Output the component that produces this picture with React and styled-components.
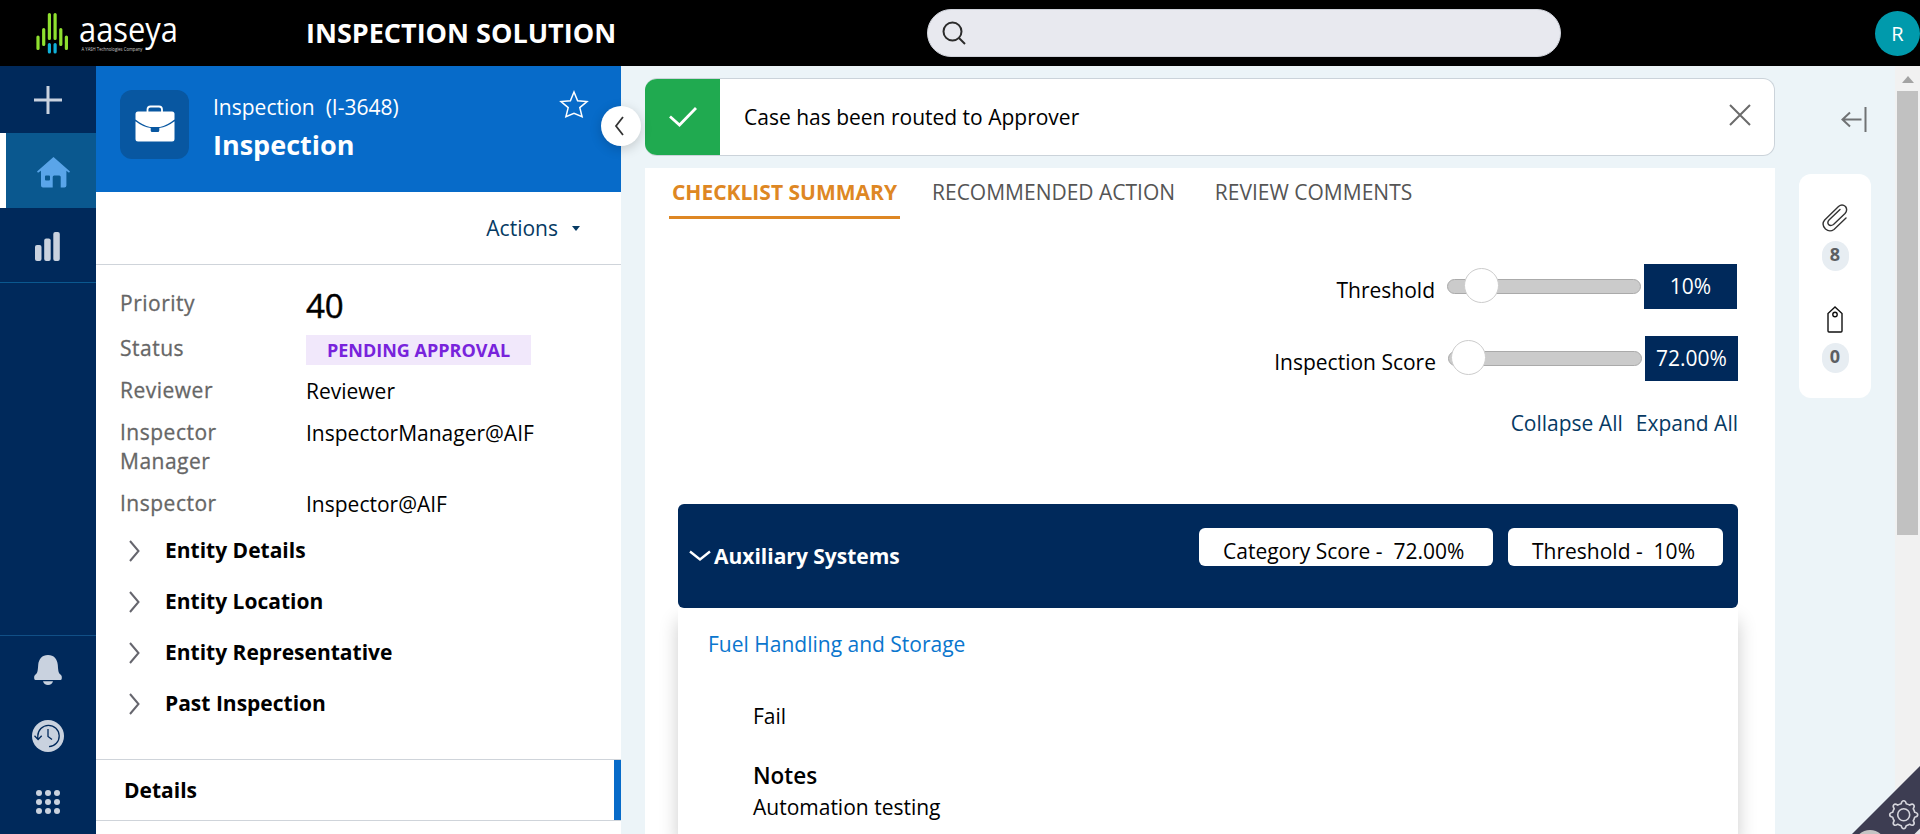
import React from "react";
import styled, { createGlobalStyle } from "styled-components";

const GlobalStyle = createGlobalStyle`
  * { box-sizing: border-box; }
  html, body { margin: 0; padding: 0; overflow: hidden; }
  body { font-family: "Open Sans", "Noto Sans", sans-serif; font-size: 21px; color: #000; background: #ecf4f8; }
  button { font: inherit; color: inherit; background: none; border: 0; padding: 0; cursor: pointer; }
  svg { display: block; flex: none; }
`;

const navy = "#00295b";
const blue = "#076bc9";

const Page = styled.div`
  display: flex;
  flex-direction: column;
  width: 1920px;
  height: 834px;
  overflow: hidden;
  position: relative;
`;

/* ---------- header ---------- */
const Header = styled.header`
  flex: none;
  display: flex;
  align-items: center;
  height: 66px;
  background: #000;
`;
const LogoBox = styled.div`
  width: 306px;
  padding-left: 36px;
`;
const AppTitle = styled.h1`
  margin: 0;
  padding-bottom: 2px;
  width: 621px;
  font-size: 27px;
  font-weight: 700;
  color: #fff;
  white-space: nowrap;
`;
const SearchBar = styled.div`
  display: flex;
  align-items: center;
  width: 634px;
  height: 48px;
  padding-left: 14px;
  border: 1px solid #cfd2da;
  border-radius: 24px;
  background: #e8e9ef;
`;
const Avatar = styled.div`
  margin-left: auto;
  display: flex;
  align-items: center;
  justify-content: center;
  width: 45px;
  height: 45px;
  border-radius: 50%;
  background: #009aac;
  color: #fff;
  font-size: 20px;
`;

/* ---------- shell ---------- */
const Body = styled.div`
  flex: 1;
  min-height: 0;
  display: flex;
`;
const Rail = styled.nav`
  flex: none;
  display: flex;
  flex-direction: column;
  width: 96px;
  background: ${navy};
`;
const RailItem = styled.button`
  display: flex;
  align-items: center;
  justify-content: center;
  width: 96px;
  height: ${(p) => p.$h}px;
  border-left: ${(p) => (p.$active ? "6px solid #fff" : "0")};
  padding: ${(p) => (p.$active ? "4px 0 0 5px" : p.$line ? "2px 1px 0 0" : "0")};
  background: ${(p) => (p.$active ? "#0a588f" : "transparent")};
  border-bottom: ${(p) => (p.$line ? "1px solid #0a588f" : "0")};
`;
const RailFooter = styled.div`
  margin-top: auto;
  height: 199px;
  padding-top: 1px;
  border-top: 1px solid #114f86;
`;

/* ---------- case panel ---------- */
const CasePanel = styled.aside`
  position: relative;
  flex: none;
  display: flex;
  flex-direction: column;
  width: 525px;
  background: #fff;
`;
const CaseHeader = styled.div`
  flex: none;
  display: flex;
  align-items: flex-start;
  height: 126px;
  padding: 24px 32px 0 24px;
  background: ${blue};
  color: #fff;
`;
const CaseIcon = styled.div`
  display: flex;
  align-items: center;
  justify-content: center;
  width: 69px;
  height: 69px;
  padding-bottom: 2px;
  border-radius: 12px;
  background: #0857a1;
`;
const CaseNames = styled.div`
  flex: 1;
  margin-left: 24px;
`;
const CaseType = styled.div`
  height: 35px;
  line-height: 34px;
  white-space: pre;
`;
const CaseName = styled.div`
  height: 40px;
  line-height: 40px;
  font-size: 27px;
  font-weight: 700;
`;
const CollapseKnob = styled.button`
  position: absolute;
  right: -20px;
  top: 40px;
  z-index: 2;
  display: flex;
  align-items: center;
  justify-content: center;
  width: 40px;
  height: 40px;
  padding-right: 5px;
  border-radius: 50%;
  background: #fff;
  box-shadow: 0 3px 12px rgba(0, 0, 0, 0.18);
`;
const ActionRow = styled.div`
  flex: none;
  display: flex;
  align-items: center;
  justify-content: flex-end;
  gap: 14px;
  height: 73px;
  padding-right: 41px;
  border-bottom: 1px solid #cfd4da;
  color: #063a63;
`;
const Fields = styled.dl`
  margin: 0;
  padding: 24px 24px 0 24px;
`;
const Field = styled.div`
  display: grid;
  grid-template-columns: 186px 1fr;
  height: ${(p) => p.$h}px;
`;
const FieldLabel = styled.dt`
  width: 130px;
  line-height: 29px;
  color: #666;
  letter-spacing: 0.5px;
  -webkit-text-stroke: 0.3px #666;
`;
const FieldValue = styled.dd`
  margin: ${(p) => (p.$big ? 2 : 1)}px 0 0;
  line-height: 29px;
  font-size: ${(p) => (p.$big ? 33 : 21)}px;
  -webkit-text-stroke: ${(p) => (p.$big ? 0.5 : 0)}px #000;
`;
const StatusBadge = styled.span`
  display: flex;
  align-items: center;
  justify-content: center;
  width: 225px;
  height: 30px;
  background: #f1e8fb;
  color: #7823dc;
  font-size: 18px;
  font-weight: 700;
`;
const Section = styled.button`
  display: flex;
  align-items: center;
  gap: 25px;
  width: 100%;
  height: 51px;
  padding-left: 33px;
  font-weight: 700;
`;
const SectionName = styled.span`
  padding-bottom: 1px;
`;
const DetailsTab = styled.div`
  display: flex;
  align-items: center;
  height: 62px;
  margin-top: 30px;
  padding-left: 28px;
  border-top: 1px solid #cfd4da;
  border-bottom: 1px solid #cfd4da;
  font-weight: 700;
  &::after {
    content: "";
    width: 7px;
    height: 60px;
    margin-left: auto;
    background: ${blue};
  }
`;

/* ---------- work area ---------- */
const WorkArea = styled.main`
  flex: none;
  display: flex;
  flex-direction: column;
  width: 1130px;
  margin-left: 24px;
  padding-top: 12px;
`;
const Banner = styled.div`
  flex: none;
  display: flex;
  align-items: center;
  height: 78px;
  border: 1px solid #cbd3da;
  border-left: 0;
  border-radius: 12px;
  background: #fff;
  overflow: hidden;
`;
const BannerIcon = styled.div`
  display: flex;
  align-items: center;
  justify-content: center;
  width: 75px;
  height: 76px;
  background: #20aa50;
`;
const BannerText = styled.div`
  flex: 1;
  padding-left: 24px;
`;
const BannerClose = styled.button`
  margin: 0 23px 4px 0;
`;
const Card = styled.section`
  flex: 1;
  min-height: 0;
  display: flex;
  flex-direction: column;
  margin-top: 12px;
  padding: 0 37px 0 33px;
  background: #fff;
  overflow: hidden;
`;
const Tabs = styled.div`
  flex: none;
  display: flex;
  height: 51px;
  margin-left: -9px;
`;
const Tab = styled.button`
  width: ${(p) => p.$w}px;
  height: 51px;
  margin-right: ${(p) => p.$gap || 0}px;
  padding-bottom: 1px;
  border-bottom: 3px solid ${(p) => (p.$active ? "#de8723" : "transparent")};
  color: ${(p) => (p.$active ? "#de8723" : "#555")};
  font-weight: ${(p) => (p.$active ? 700 : 400)};
  white-space: nowrap;
`;
const SliderRow = styled.div`
  flex: none;
  display: flex;
  justify-content: flex-end;
  align-items: center;
  height: 45px;
  margin-top: ${(p) => p.$mt}px;
  margin-right: ${(p) => p.$mr}px;
`;
const SliderLabel = styled.span`
  padding-top: 6px;
  margin-right: 12px;
`;
const Track = styled.div`
  display: flex;
  align-items: center;
  width: 194px;
  height: 15px;
  padding-left: ${(p) => p.$at}px;
  margin: 0 3px 1px 0;
  border: 1px solid #aaa;
  border-radius: 8px;
  background: #cbcbcb;
`;
const Thumb = styled.div`
  flex: none;
  width: 35px;
  height: 35px;
  margin-bottom: 1px;
  border: 1px solid #ccc;
  border-radius: 50%;
  background: #fff;
`;
const ValueBox = styled.div`
  display: flex;
  align-items: center;
  justify-content: center;
  width: 93px;
  height: 45px;
  padding-bottom: 1px;
  background: ${navy};
  color: #fff;
`;
const Links = styled.div`
  flex: none;
  display: flex;
  justify-content: flex-end;
  gap: 13px;
  height: 30px;
  margin-top: 27px;
  line-height: 30px;
  color: #063a63;
`;
const Category = styled.div`
  flex: none;
  display: flex;
  align-items: flex-start;
  height: 104px;
  margin-top: 66px;
  padding: 24px 15px 0 11px;
  border-radius: 6px;
  background: ${navy};
  color: #fff;
`;
const CategoryName = styled.div`
  flex: 1;
  display: flex;
  align-items: center;
  gap: 3px;
  height: 56px;
  font-weight: 700;
`;
const Pill = styled.div`
  width: ${(p) => p.$w}px;
  height: 38px;
  margin-left: 15px;
  padding: 8px 0 0 24px;
  border-radius: 6px;
  background: #fff;
  color: #000;
  line-height: 30px;
  white-space: pre;
`;
const CategoryBody = styled.div`
  flex: 1;
  padding: 21px 30px 0;
  background: #fff;
  box-shadow: 0 12px 18px rgba(0, 0, 0, 0.2);
`;
const ItemLink = styled.div`
  height: 30px;
  line-height: 30px;
  color: #0a76ce;
`;
const Answer = styled.div`
  margin: 42px 0 0 45px;
  line-height: 30px;
`;
const NotesTitle = styled.div`
  margin: 28px 0 0 45px;
  line-height: 33px;
  font-size: 22.5px;
  font-weight: 600;
`;
const Note = styled.div`
  margin-left: 45px;
  line-height: 30px;
`;

/* ---------- utilities ---------- */
const Utilities = styled.aside`
  flex: none;
  display: flex;
  flex-direction: column;
  align-items: flex-end;
  width: 120px;
  padding: 41px 24px 0 0;
`;
const UtilityCard = styled.div`
  display: flex;
  flex-direction: column;
  align-items: center;
  width: 72px;
  height: 224px;
  margin-top: 41px;
  padding-top: 30px;
  border-radius: 12px;
  background: #fff;
`;
const Count = styled.div`
  display: flex;
  align-items: center;
  justify-content: center;
  width: 27px;
  height: 30px;
  padding-bottom: 4px;
  margin: ${(p) => p.$m};
  border-radius: 14px;
  background: #e7edf2;
  color: #5c5f62;
  font-size: 18px;
  font-weight: 700;
`;
const Scrollbar = styled.div`
  flex: none;
  display: flex;
  flex-direction: column;
  align-items: center;
  width: 25px;
  background: #f1f1f1;
`;
const ScrollUp = styled.div`
  height: 25px;
  padding-top: 10px;
`;
const ScrollThumb = styled.div`
  width: 21px;
  height: 444px;
  background: #c1c1c1;
`;
const Corner = styled.div`
  position: absolute;
  right: 0;
  bottom: 0;
`;

const Logo = () => (
  <svg width="155" height="66" viewBox="36 0 155 66">
    <g strokeWidth="3.2" strokeLinecap="round" stroke="#8fe02f">
      <path d="M38 37v11.500M43.700 29.500v15M49.400 14.500v24M55.100 14.500v24M60.800 29.500v15M66.400 37v11.500" />
      <path stroke="#10b0d8" d="M49.400 44.500v7.500M55.100 44.500v7.500" />
    </g>
    <text x="79" y="42" fontFamily="Open Sans, sans-serif" fontSize="34.500" fill="#fff" textLength="99" lengthAdjust="spacingAndGlyphs">aaseya</text>
    <text x="81.500" y="51" fontFamily="Open Sans, sans-serif" fontSize="5" fill="#c8c8c8" textLength="61" lengthAdjust="spacingAndGlyphs">A YASH Technologies Company</text>
  </svg>
);

const Chevron = () => (
  <svg width="11" height="22" viewBox="0 0 11 22" fill="none" stroke="#66666e" strokeWidth="2">
    <path d="M1 1l8.500 10L1 21" />
  </svg>
);

const light = "#c9d2df";

function App() {
  return (
    <Page>
      <GlobalStyle />
      <Header>
        <LogoBox><Logo /></LogoBox>
        <AppTitle>INSPECTION SOLUTION</AppTitle>
        <SearchBar>
          <svg width="24" height="24" viewBox="0 0 24 24" fill="none" stroke="#2b2b2b" strokeWidth="2">
            <circle cx="10.5" cy="10.5" r="9" />
            <path d="M17 17l6 6" />
          </svg>
        </SearchBar>
        <Avatar>R</Avatar>
      </Header>
      <Body>
        <Rail>
          <RailItem $h={67}>
            <svg width="28" height="28" viewBox="0 0 28 28" stroke={light} strokeWidth="3"><path d="M14 0v28M0 14h28" /></svg>
          </RailItem>
          <RailItem $h={75} $active>
            <svg width="33" height="31" viewBox="0 0 33 31" fill="#5aa5e9">
              <path fillRule="evenodd" d="M16.500 0L33 14.500l-1 1.200-2.600-2V28.500q0 2-2 2h-3.700V20q0-1.500-1.500-1.500h-5q-1.500 0-1.500 1.500v10.500H6q-2 0-2-2V13.700l-3 2-1-1.200zM9 18.500q-1 0-1 1V22.500q0 1 1 1h3q1 0 1-1v-3q0-1-1-1z" />
            </svg>
          </RailItem>
          <RailItem $h={75} $line>
            <svg width="25" height="29" viewBox="0 0 25 29" fill={light}>
              <rect y="13" width="6.500" height="16" rx="2" /><rect x="9.200" y="6.500" width="6.500" height="22.500" rx="2" /><rect x="18.300" width="6.500" height="29" rx="2" />
            </svg>
          </RailItem>
          <RailFooter>
            <RailItem $h={66}>
              <svg width="28" height="30" viewBox="0 0 28 30" fill={light}>
                <path d="M14 0C8 0 4.700 4 4.200 10C3.800 16 3.500 18 1.500 19.500C0 21 0 22 .3 24Q.6 25 1.500 25h25q.9 0 1.200-1C28 22 28 21 26.500 19.500C24.500 18 24.200 16 23.800 10C23.300 4 20 0 14 0zM9 26.300h10C18.500 28.500 16.500 30 14 30S9.500 28.500 9 26.300z" />
              </svg>
            </RailItem>
            <RailItem $h={66}>
              <svg width="34" height="32" viewBox="0 0 34 32" fill="none" stroke={navy} strokeWidth="1.300">
                <circle cx="17" cy="16" r="16" fill={light} stroke="none" />
                <path d="M6.800 19V16A10.700 10.700 0 1 1 18 26.700M3.500 15.800l3.600 3.700 3.600-3.700M17 9v7.500l4 3" />
              </svg>
            </RailItem>
            <RailItem $h={66}>
              <svg width="24" height="24" viewBox="0 0 24 24" fill={light}>
                {[3, 12, 21].map((y) => [3, 12, 21].map((x) => <circle key={`${x}-${y}`} cx={x} cy={y} r="3" />))}
              </svg>
            </RailItem>
          </RailFooter>
        </Rail>

        <CasePanel>
          <CaseHeader>
            <CaseIcon>
              <svg width="40" height="37" viewBox="0 0 40 37">
                <path d="M12.500 7V4.500q0-3 3-3h8.500q3 0 3 3V7" fill="none" stroke="#fff" strokeWidth="1.800" />
                <path fill="#fff" d="M3 6.500h34q2.500 0 2.500 2.500v5.500Q32 20.500 25 22H15Q8 20.500 .5 14.500V9q0-2.500 2.500-2.500z" />
                <path fill="#fff" d="M.5 16.200Q8 22 15.700 23v2.500q0 1.500 1.500 1.500h5.600q1.500 0 1.500-1.500V23Q32 22 39.500 16.200V34q0 2.500-2.500 2.500H3Q.5 36.500 .5 34z" />
              </svg>
            </CaseIcon>
            <CaseNames>
              <CaseType>{"Inspection  (I-3648)"}</CaseType>
              <CaseName>Inspection</CaseName>
            </CaseNames>
            <svg width="30" height="29" viewBox="0 0 30 29" fill="none" stroke="#fff" strokeWidth="1.500">
              <path d="M15 2l3.600 8.800 9.400.7-7.200 6.100 2.300 9.200-8.100-3.500-8.100 3.500 2.300-9.200L2 11.500l9.400-.7z" />
            </svg>
          </CaseHeader>
          <CollapseKnob>
            <svg width="10" height="20" viewBox="0 0 10 20" fill="none" stroke="#333" strokeWidth="1.800"><path d="M9 1L2 10l7 9" /></svg>
          </CollapseKnob>
          <ActionRow>
            <span>Actions</span>
            <svg width="8" height="5" viewBox="0 0 8 5" fill="#063a63"><path d="M0 0h8L4 5z" /></svg>
          </ActionRow>
          <Fields>
            <Field $h={45}><FieldLabel>Priority</FieldLabel><FieldValue $big>40</FieldValue></Field>
            <Field $h={42}><FieldLabel>Status</FieldLabel><FieldValue><StatusBadge>PENDING APPROVAL</StatusBadge></FieldValue></Field>
            <Field $h={42}><FieldLabel>Reviewer</FieldLabel><FieldValue>Reviewer</FieldValue></Field>
            <Field $h={71}><FieldLabel>Inspector Manager</FieldLabel><FieldValue>InspectorManager@AIF</FieldValue></Field>
            <Field $h={36}><FieldLabel>Inspector</FieldLabel><FieldValue>Inspector@AIF</FieldValue></Field>
          </Fields>
          <div>
            {["Entity Details", "Entity Location", "Entity Representative", "Past Inspection"].map((t) => (
              <Section key={t}><Chevron /><SectionName>{t}</SectionName></Section>
            ))}
          </div>
          <DetailsTab>Details</DetailsTab>
        </CasePanel>

        <WorkArea>
          <Banner>
            <BannerIcon>
              <svg width="28" height="20" viewBox="0 0 28 20" fill="none" stroke="#fff" strokeWidth="2.800"><path d="M1 9.500l9.500 8.500L27 1" /></svg>
            </BannerIcon>
            <BannerText>Case has been routed to Approver</BannerText>
            <BannerClose>
              <svg width="22" height="22" viewBox="0 0 22 22" stroke="#6b6b6b" strokeWidth="2"><path d="M1 1l20 20M21 1L1 21" /></svg>
            </BannerClose>
          </Banner>
          <Card>
            <Tabs>
              <Tab $w={231} $gap={32} $active>CHECKLIST SUMMARY</Tab>
              <Tab $w={243} $gap={39}>RECOMMENDED ACTION</Tab>
              <Tab $w={199}>REVIEW COMMENTS</Tab>
            </Tabs>
            <SliderRow $mt={45} $mr={1}>
              <SliderLabel>Threshold</SliderLabel>
              <Track $at={16}><Thumb /></Track>
              <ValueBox>10%</ValueBox>
            </SliderRow>
            <SliderRow $mt={27} $mr={0}>
              <SliderLabel>Inspection Score</SliderLabel>
              <Track $at={2}><Thumb /></Track>
              <ValueBox>72.00%</ValueBox>
            </SliderRow>
            <Links><span>Collapse All</span><span>Expand All</span></Links>
            <Category>
              <CategoryName>
                <svg width="22" height="12" viewBox="0 0 22 12" fill="none" stroke="#fff" strokeWidth="2.400"><path d="M1 1.500l10 8 10-8" /></svg>
                Auxiliary Systems
              </CategoryName>
              <Pill $w={294}>{"Category Score -  72.00%"}</Pill>
              <Pill $w={215}>{"Threshold -  10%"}</Pill>
            </Category>
            <CategoryBody>
              <ItemLink>Fuel Handling and Storage</ItemLink>
              <Answer>Fail</Answer>
              <NotesTitle>Notes</NotesTitle>
              <Note>Automation testing</Note>
            </CategoryBody>
          </Card>
        </WorkArea>

        <Utilities>
          <svg width="30" height="26" viewBox="0 0 30 26" fill="none" stroke="#707274" strokeWidth="2">
            <path d="M1.500 12.500h19M9 5.500l-7.500 7 7.500 7" /><path d="M24.500 0v25" />
          </svg>
          <UtilityCard>
            <svg width="26" height="28" viewBox="0 0 26 28" fill="none" stroke="#333" strokeWidth="1.400" strokeLinecap="round">
              <path d="M24 14L12 25.500Q7.500 28.500 3.500 25Q-1 20.500 2.700 16L16.500 2.500Q20-.5 23.500 2.500Q26 6 23 9.500L11.500 20.500Q8.500 22.500 6.500 20.500Q5 18 7 16L18 5.500" />
            </svg>
            <Count $m="9px 0 35px">8</Count>
            <svg width="16" height="27" viewBox="0 0 16 27" fill="none" stroke="#111" strokeWidth="1.400">
              <path d="M8 1L1 7.500V25q0 1 1 1h12q1 0 1-1V7.500z" /><circle cx="8" cy="8.500" r="2.200" />
            </svg>
            <Count $m="10px 0 0">0</Count>
          </UtilityCard>
        </Utilities>

        <Scrollbar>
          <ScrollUp><svg width="12" height="7" viewBox="0 0 12 7" fill="#a3a3a3"><path d="M6 0l6 7H0z" /></svg></ScrollUp>
          <ScrollThumb />
        </Scrollbar>
      </Body>
      <Corner>
        <svg width="68" height="68" viewBox="0 0 68 68">
          <path d="M68 0v68H0z" fill="#3d3d52" />
          <path d="M68 62.500v5.500h-5.500z" fill="#e4e4e8" />
          <circle cx="18" cy="80" r="16" fill="#c4c4c4" />
          <g transform="translate(51.700 48.700)" fill="none" stroke="#d5d5dc" strokeWidth="1.600">
            <circle r="6" />
            <path strokeLinejoin="round" d="M-2.500-11Q-2-14 0-14T2.500-11Q4.500-10.500 6-9.500Q8.500-11.300 9.900-9.900T9.500-6Q10.500-4.500 11-2.500Q14-2 14 0T11 2.500Q10.500 4.500 9.500 6Q11.300 8.500 9.900 9.900T6 9.500Q4.500 10.500 2.500 11Q2 14 0 14T-2.500 11Q-4.500 10.500-6 9.500Q-8.500 11.300-9.900 9.900T-9.500 6Q-10.500 4.500-11 2.500Q-14 2-14 0T-11-2.500Q-10.500-4.500-9.500-6Q-11.300-8.500-9.900-9.900T-6-9.500Q-4.500-10.500-2.500-11z" />
          </g>
        </svg>
      </Corner>
    </Page>
  );
}

export default App;
